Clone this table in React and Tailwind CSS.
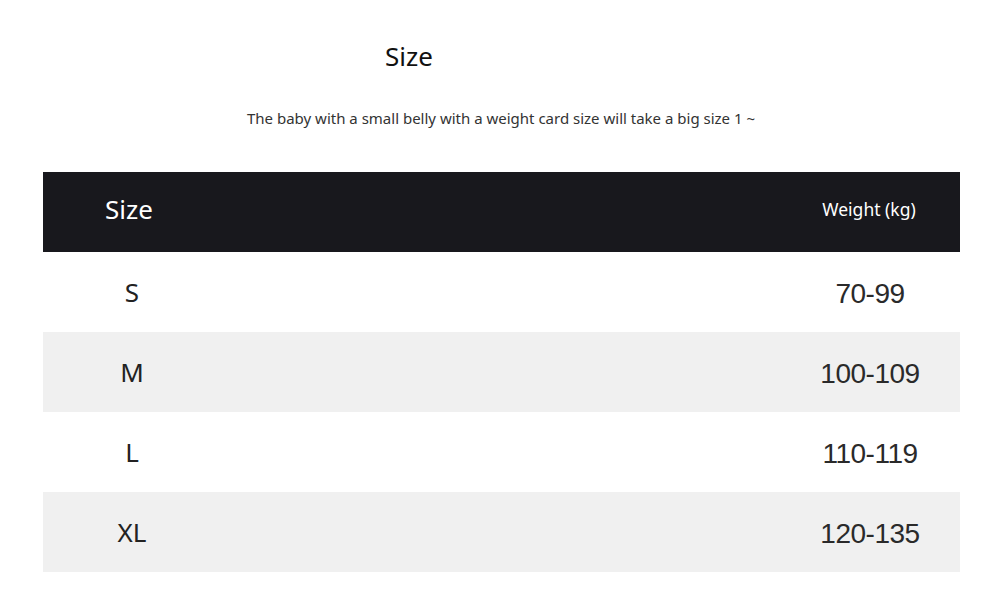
const rows = [
  { size: "S", weight: "70-99", shaded: false },
  { size: "M", weight: "100-109", shaded: true },
  { size: "L", weight: "110-119", shaded: false },
  { size: "XL", weight: "120-135", shaded: true },
];

export default function App() {
  return (
    <div className="w-[1000px] h-[610px] bg-white font-['Noto_Sans',sans-serif] text-[#1a1a1a]">
      {/* heading */}
      <div className="pt-[36px] pl-[385px] h-[108px]">
        <h1 className="text-[26px] leading-[40px] text-[#111]">Size</h1>
      </div>
      <p className="pl-[247px] text-[15px] leading-[20px] text-[#333]">
        The baby with a small belly with a weight card size will take a big size 1 ~
      </p>

      {/* size table */}
      <div className="mt-[44px] mx-[43px] w-[917px]">
        <div className="flex items-center h-[80px] pb-[6px] bg-[#18181d] text-white">
          <div className="w-[178px] pl-[62px] text-[26px]">Size</div>
          <div className="flex-1" />
          <div className="w-[180px] text-center text-[17.5px] pr-[2px]">Weight (kg)</div>
        </div>
        {rows.map((r) => (
          <div
            key={r.size}
            className={
              r.shaded
                ? "flex items-center h-[80px] bg-[#f0f0f0]"
                : "flex items-center h-[80px] bg-white"
            }
          >
            <div className="w-[178px] text-center text-[26px] text-[#222]">{r.size}</div>
            <div className="flex-1" />
            <div className="w-[180px] pt-[4px] text-center font-['Liberation_Sans',sans-serif] text-[28px] tracking-[-0.5px] text-[#2a2a2a]">
              {r.weight}
            </div>
          </div>
        ))}
      </div>
    </div>
  );
}
